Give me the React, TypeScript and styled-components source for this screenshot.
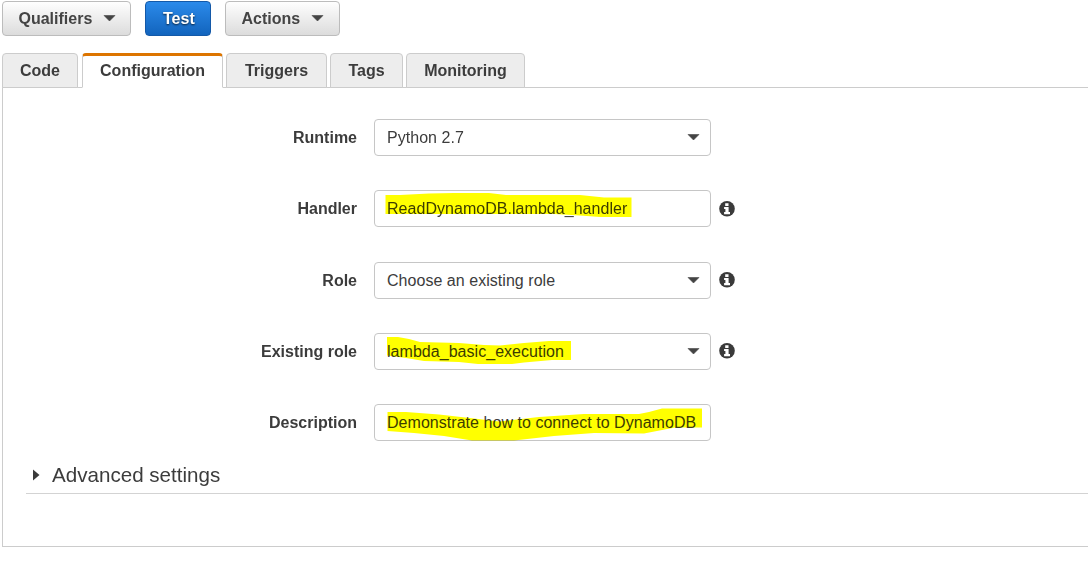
import React from "react";
import styled, { createGlobalStyle, css } from "styled-components";

const GlobalStyle = createGlobalStyle`
  * { box-sizing: border-box; }
  body {
    margin: 0;
    background: #fff;
    color: #3c3c3c;
    font: 16px/20px "Liberation Sans", Arial, sans-serif;
    overflow: hidden;
  }
`;

const Page = styled.main`
  height: 563px;
  overflow: hidden;
  padding: 1px 0 0 2px;
`;

const Toolbar = styled.div`
  display: flex;
  gap: 14px;
  height: 35px;
`;

const Button = styled.button<{ $primary?: boolean; $width: number }>`
  display: flex;
  align-items: center;
  gap: 11px;
  width: ${(p) => p.$width}px;
  height: 35px;
  padding: 0 0 0 15.5px;
  border: 1px solid #bcbcbc;
  border-radius: 4px;
  background: linear-gradient(#fefefe, #dcdcdc);
  color: #444;
  font: bold 16px/20px "Liberation Sans", Arial, sans-serif;

  svg {
    margin-bottom: 1px;
  }

  ${(p) =>
    p.$primary &&
    css`
      padding-left: 17px;
      border-color: #1459a8;
      background: linear-gradient(#2b8aea, #1264bd);
      color: #fff;
      text-shadow: 0 1px 2px rgba(0, 0, 0, 0.75);
    `}
`;

const Tabs = styled.nav`
  display: flex;
  gap: 3px;
  height: 35px;
  margin-top: 17px;
`;

const Tab = styled.a<{ $active?: boolean; $width: number }>`
  width: ${(p) => p.$width}px;
  height: 35px;
  border: 1px solid #ccc;
  border-radius: 4px 4px 0 0;
  background: #ededed;
  font-weight: bold;
  line-height: 34px;
  text-align: center;
  ${(p) =>
    p.$active &&
    css`
      position: relative;
      margin-left: 1px;
      border-top: 3px solid #dd7500;
      border-bottom-color: #fff;
      background: #fff;
      line-height: 30px;
    `}
`;

const Panel = styled.section`
  height: 460px;
  margin-top: -1px;
  padding-top: 31px;
  border: 1px solid #ccc;
  border-right: 0;
`;

const Form = styled.form`
  display: grid;
  grid-auto-rows: 37px;
  row-gap: 34.3px;
`;

const Row = styled.div`
  display: grid;
  grid-template-columns: 363px 337px auto;
  column-gap: 8px;
  align-items: center;
`;

const Label = styled.label`
  padding: 0.9px 9px 0 0;
  text-align: right;
  font-weight: bold;
`;

const Field = styled.div`
  position: relative;
  display: flex;
  align-items: center;
  justify-content: space-between;
  height: 37px;
  padding: 0 10px 0 12px;
  border: 1px solid #c6c6c6;
  border-radius: 4px;
  background: #fff;
`;

const Value = styled.span`
  padding-top: 0.9px;
  letter-spacing: 0.04px;
  white-space: nowrap;
`;

const Marker = styled.svg`
  position: absolute;
  left: -1px;
  top: -1px;
  width: 337px;
  height: 37px;
  mix-blend-mode: multiply;
  pointer-events: none;
`;

const Advanced = styled.div`
  display: flex;
  align-items: center;
  gap: 12px;
  height: 36px;
  margin: 17px 0 0 23px;
  padding: 0 0 1px 7px;
  border-bottom: 1px solid #d3d3d3;
  font-size: 20.6px;
`;

const Caret = () => (
  <svg width="13" height="7" viewBox="0 0 13 7">
    <path d="M1 .5h11L6.500 6z" fill="#444" stroke="#444" strokeWidth=".6" strokeLinejoin="round" />
  </svg>
);

const Info = () => (
  <svg width="16" height="16" viewBox="0 0 16 16">
    <circle cx="8" cy="7.8" r="7.8" fill="#3a3a3a" />
    <path d="M6.200 2.200h3.300v2.700H6.200zM5.100 5.900h4.500v5.100h1.400v2.200H5.100V11h1.300V8.100H5.100z" fill="#fff" />
  </svg>
);

interface RowData {
  label: string;
  value: string;
  select?: boolean;
  info?: boolean;
  marker?: string;
}

const rows: RowData[] = [
  { label: "Runtime", value: "Python 2.7", select: true },
  {
    label: "Handler",
    value: "ReadDynamoDB.lambda_handler",
    info: true,
    marker:
      "M11.500 5 H26 L55 3.500 L80 3 H115 L132 5 H206 L230 7.500 H257.500 V27 H226 L206 25.500 L180 24 H11.500z",
  },
  { label: "Role", value: "Choose an existing role", select: true, info: true },
  {
    label: "Existing role",
    value: "lambda_basic_execution",
    select: true,
    info: true,
    marker:
      "M13 4 H24 L35 6 L46 9 L85 10 L110 12 L126 12.500 L150 10 L175 8 H197 V27 H178 L150 29.500 L138 31 H104 L85 29 L50 28 L32 25 L13 22.500z",
  },
  {
    label: "Description",
    value: "Demonstrate how to connect to DynamoDB",
    marker:
      "M13.500 8 H32 L65 10.500 L100 14.500 L125 17.500 L165 13 L210 10 H265 L275 8 L288 4.500 H328 V23.500 H301 L270 29.500 L220 29 L180 32 L140 36.500 H98 L70 32 L40 29 L13.500 27z",
  },
];

export default function App() {
  return (
    <>
      <GlobalStyle />
      <Page>
        <Toolbar>
          <Button $width={129}>
            Qualifiers <Caret />
          </Button>
          <Button $primary $width={66}>
            Test
          </Button>
          <Button $width={115}>
            Actions <Caret />
          </Button>
        </Toolbar>
        <Tabs>
          <Tab $width={76}>Code</Tab>
          <Tab $active $width={141}>
            Configuration
          </Tab>
          <Tab $width={101}>Triggers</Tab>
          <Tab $width={73}>Tags</Tab>
          <Tab $width={119}>Monitoring</Tab>
        </Tabs>
        <Panel>
          <Form>
            {rows.map((row) => (
              <Row key={row.label}>
                <Label>{row.label}</Label>
                <Field>
                  <Value>{row.value}</Value>
                  {row.select && <Caret />}
                  {row.marker && (
                    <Marker viewBox="0 0 337 37">
                      <path d={row.marker} fill="#ff0" />
                    </Marker>
                  )}
                </Field>
                {row.info && <Info />}
              </Row>
            ))}
          </Form>
          <Advanced>
            <svg width="7" height="12" viewBox="0 0 7 12">
              <path d="M0 0.500 6.500 6 0 11.500z" fill="#3a3a3a" />
            </svg>
            Advanced settings
          </Advanced>
        </Panel>
      </Page>
    </>
  );
}
